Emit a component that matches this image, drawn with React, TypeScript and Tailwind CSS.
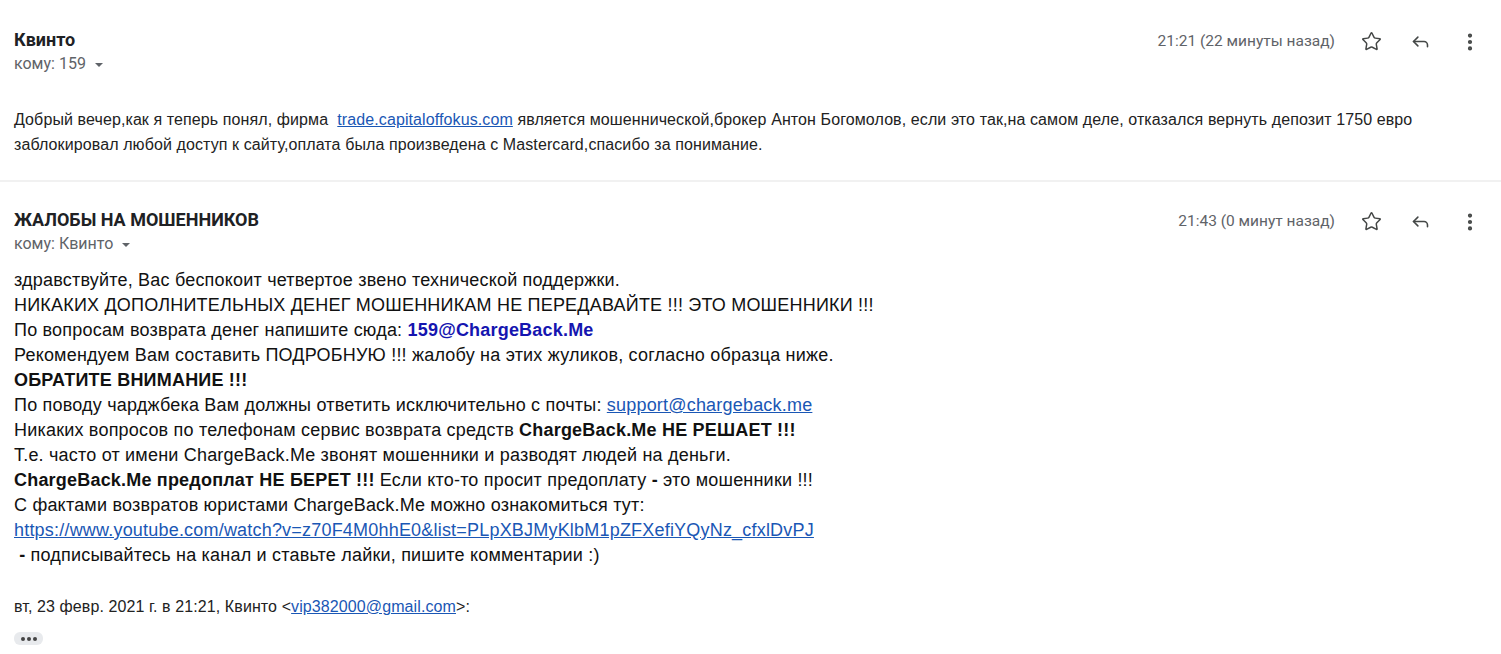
import { Star, Reply, MoreVertical } from "lucide-react";

type HeaderProps = {
  sender: string;
  to: string;
  time: string;
};

function MessageHeader({ sender, to, time }: HeaderProps) {
  return (
    <div className="flex items-start justify-between">
      <div className="font-['Roboto',sans-serif]">
        <div className="text-[18px] font-bold text-[#202124] leading-[22px]">{sender}</div>
        <div className="mt-[3px] flex items-center text-[16px] text-[#5f6368] leading-[20px]">
          кому: {to}
          <svg width="10" height="10" viewBox="0 0 10 10" className="ml-[8px] mt-[1px]">
            <path d="M1 3 L9 3 L5 7 Z" fill="#5f6368" />
          </svg>
        </div>
      </div>
      <div className="flex items-center font-['Roboto',sans-serif] text-[15.5px] text-[#5f6368] pt-[1px]">
        <span>{time}</span>
        <div className="ml-[26px] flex items-center gap-[28px] text-[#444746]">
          <Star size={21} strokeWidth={1.7} />
          <Reply size={21} strokeWidth={1.8} />
          <MoreVertical size={22} strokeWidth={2.6} />
        </div>
      </div>
    </div>
  );
}

export default function App() {
  return (
    <div className="w-[1501px] h-[654px] overflow-hidden bg-white">
      {/* first message */}
      <div className="px-[14px] pt-[29px] pr-[20px]">
        <MessageHeader sender="Квинто" to="159" time="21:21 (22 минуты назад)" />
        <div className="mt-[33px] font-['Liberation_Sans',Arial,sans-serif] text-[16px] leading-[25px] text-[#222] tracking-[0.1px]">
          <div>
            Добрый вечер,как я теперь понял, фирма&nbsp;{" "}
            <a className="text-[#1a57b5] underline">trade.capitaloffokus.com</a> является мошеннической,брокер Антон
            Богомолов, если это так,на самом деле, отказался вернуть депозит 1750 евро
          </div>
          <div>заблокировал любой доступ к сайту,оплата была произведена с Mastercard,спасибо за понимание.</div>
        </div>
      </div>

      <div className="mt-[23px] h-[2px] bg-[#f1f1f1]" />

      {/* second message */}
      <div className="px-[14px] pt-[27px] pr-[20px]">
        <MessageHeader sender="ЖАЛОБЫ НА МОШЕННИКОВ" to="Квинто" time="21:43 (0 минут назад)" />
        <div className="mt-[14px] font-['Liberation_Sans',Arial,sans-serif] text-[18px] leading-[25px] text-[#111] tracking-[0.2px]">
          <div>здравствуйте, Вас беспокоит четвертое звено технической поддержки.</div>
          <div>НИКАКИХ ДОПОЛНИТЕЛЬНЫХ ДЕНЕГ МОШЕННИКАМ НЕ ПЕРЕДАВАЙТЕ !!! ЭТО МОШЕННИКИ !!!</div>
          <div>
            По вопросам возврата денег напишите сюда: <b className="text-[#1515b0]">159@ChargeBack.Me</b>
          </div>
          <div>Рекомендуем Вам составить ПОДРОБНУЮ !!! жалобу на этих жуликов, согласно образца ниже.</div>
          <div className="font-bold">ОБРАТИТЕ ВНИМАНИЕ !!!</div>
          <div>
            По поводу чарджбека Вам должны ответить исключительно с почты:{" "}
            <a className="text-[#1a57b5] underline">support@chargeback.me</a>
          </div>
          <div>
            Никаких вопросов по телефонам сервис возврата средств <b>ChargeBack.Me НЕ РЕШАЕТ !!!</b>
          </div>
          <div>Т.е. часто от имени ChargeBack.Me звонят мошенники и разводят людей на деньги.</div>
          <div>
            <b>ChargeBack.Me предоплат НЕ БЕРЕТ !!!</b> Если кто-то просит предоплату <b>-</b> это мошенники !!!
          </div>
          <div>С фактами возвратов юристами ChargeBack.Me можно ознакомиться тут:</div>
          <div>
            <a className="text-[#1a57b5] underline">
              https://www.youtube.com/watch?v=z70F4M0hhE0&amp;list=PLpXBJMyKlbM1pZFXefiYQyNz_cfxlDvPJ
            </a>
          </div>
          <div>
            &nbsp;<b>-</b> подписывайтесь на канал и ставьте лайки, пишите комментарии :)
          </div>
        </div>

        <div className="mt-[28px] font-['Liberation_Sans',Arial,sans-serif] text-[16px] leading-[22px] text-[#222] tracking-[0.1px]">
          вт, 23 февр. 2021 г. в 21:21, Квинто &lt;
          <a className="text-[#1a57b5] underline">vip382000@gmail.com</a>&gt;:
        </div>

        <div className="mt-[14px] flex h-[13px] w-[29px] items-center justify-center gap-[2px] rounded-[6px] bg-[#e8eaed]">
          <span className="h-[4px] w-[4px] rounded-full bg-[#444]" />
          <span className="h-[4px] w-[4px] rounded-full bg-[#444]" />
          <span className="h-[4px] w-[4px] rounded-full bg-[#444]" />
        </div>
      </div>
    </div>
  );
}
